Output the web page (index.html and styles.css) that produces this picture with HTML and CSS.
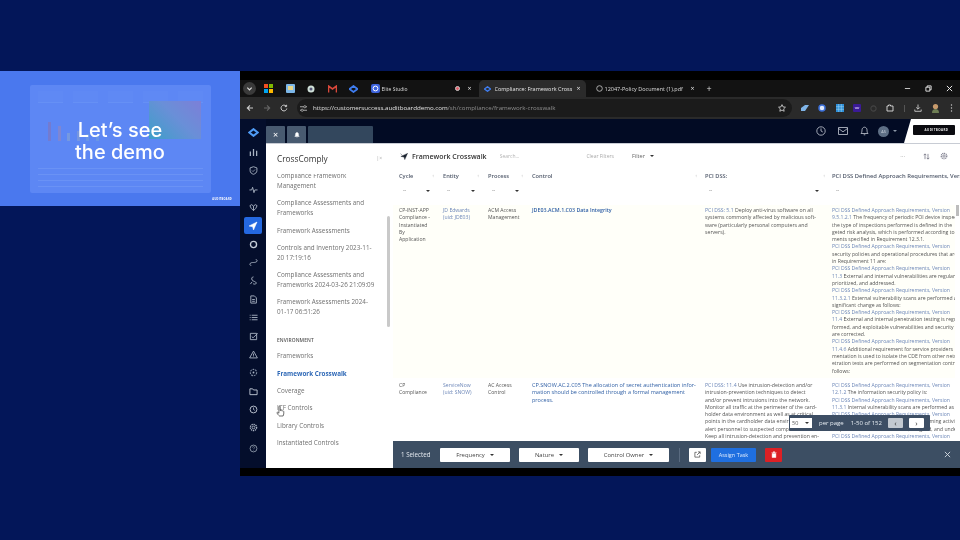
FILE: index.html
```html
<!DOCTYPE html>
<html lang="en">
<head>
<meta charset="utf-8">
<title>Let's see the demo</title>
<link rel="stylesheet" href="styles.css">
</head>
<body>
<div class="stage">

  <section class="slide">
    <div class="slide-card">
      <div class="sc-kpis"><i></i><i></i><i></i><i></i><i></i></div>
      <div class="sc-mid">
        <div class="sc-bars"><b class="b1"></b><b class="b2"></b><b class="b3"></b><b class="b4"></b><b class="b5"></b><b class="b6"></b></div>
        <div class="sc-heat"></div>
      </div>
      <div class="sc-rows"><i></i><i></i><i></i><i></i></div>
    </div>
    <h1 class="slide-title">Let’s see<br>the demo</h1>
    <div class="slide-logo">AUDITBOARD</div>
  </section>

  <section class="browser">
    <div class="tabstrip">
      <span class="tab-menu"><svg width="7" height="7" viewBox="0 0 8 8"><path d="M1.500 3l2.500 2.500L6.500 3" fill="none" stroke="#ddd" stroke-width="1.400"/></svg></span>
      <div class="pins">
        <svg width="9" height="9" viewBox="0 0 9 9"><rect width="4" height="4" fill="#f25022"/><rect x="5" width="4" height="4" fill="#7fba00"/><rect y="5" width="4" height="4" fill="#00a4ef"/><rect x="5" y="5" width="4" height="4" fill="#ffb900"/></svg>
        <svg width="9" height="9" viewBox="0 0 9 9"><rect width="9" height="9" rx="1" fill="#7db7e8"/><rect x="2" y="2" width="5" height="4" fill="#e8d68a"/></svg>
        <svg width="8" height="8" viewBox="0 0 8 8"><circle cx="4" cy="4" r="3.500" fill="#cfe0d8"/><circle cx="4" cy="4" r="1.500" fill="#557"/></svg>
        <svg width="9" height="8" viewBox="0 0 9 8"><path d="M.5 7.500V1l4 3 4-3v6.500" fill="none" stroke="#d9483b" stroke-width="1.600"/></svg>
        <svg width="9" height="8" viewBox="0 0 18 16"><path d="M1 8l8-6 8 6-8 6z" fill="none" stroke="#3f7df0" stroke-width="3.500"/></svg>
        <svg width="9" height="9" viewBox="0 0 9 9"><rect width="9" height="9" rx="2" fill="#3d63dd"/><circle cx="4.500" cy="4.500" r="2.400" fill="none" stroke="#fff"/></svg>
      </div>
      <div class="tab tab-elite"><span class="tab-name">Elite Studio</span><span class="rec"></span><span class="tab-x">×</span></div>
      <div class="tab tab-active">
        <svg width="7" height="6" viewBox="0 0 18 16"><path d="M1 8l8-6 8 6-8 6z" fill="none" stroke="#3f7df0" stroke-width="3.500"/></svg>
        <span class="tab-name">Compliance: Framework Cross</span><span class="tab-x">×</span>
      </div>
      <div class="tab tab-pdf">
        <svg width="7" height="7" viewBox="0 0 8 8"><circle cx="4" cy="4" r="3.200" fill="none" stroke="#bbb"/></svg>
        <span class="tab-name">12047-Policy Document (1).pdf</span><span class="tab-x">×</span>
      </div>
      <span class="tab-new">+</span>
      <div class="win-ctrls">
        <svg width="7" height="7" viewBox="0 0 8 8"><path d="M1 4h6" stroke="#ddd"/></svg>
        <svg width="7" height="7" viewBox="0 0 8 8"><path d="M1 2.500h4.500V7H1zM2.500 2.500V1H7v4.500H5.500" fill="none" stroke="#eee"/></svg>
        <svg width="7" height="7" viewBox="0 0 8 8"><path d="M1 1l6 6M7 1L1 7" stroke="#eee" stroke-width="1.100"/></svg>
      </div>
    </div>

    <div class="toolbar">
      <svg class="nav" width="8" height="8" viewBox="0 0 8 8"><path d="M7 4H1.500M4 1.300L1.300 4 4 6.700" fill="none" stroke="#ccc" stroke-width="1.100"/></svg>
      <svg class="nav" width="8" height="8" viewBox="0 0 8 8"><path d="M1 4h5.500M4 1.300L6.700 4 4 6.700" fill="none" stroke="#666" stroke-width="1.100"/></svg>
      <svg class="nav" width="8" height="8" viewBox="0 0 8 8"><path d="M6.800 4.500A2.900 2.900 0 1 1 6 2M6.600.8v1.800H4.800" fill="none" stroke="#ccc" stroke-width="1"/></svg>
      <div class="omnibox">
        <svg width="7" height="7" viewBox="0 0 8 8"><path d="M0 2h8M0 6h8" stroke="#bbb"/><circle cx="5.500" cy="2" r="1.300" fill="#222" stroke="#bbb" stroke-width=".8"/><circle cx="2.500" cy="6" r="1.300" fill="#222" stroke="#bbb" stroke-width=".8"/></svg>
        <span class="url"><span class="url-host">https://customersuccess.auditboarddemo.com</span>/sh/compliance/framework-crosswalk</span>
        <svg class="star" width="8" height="8" viewBox="0 0 10 10"><path d="M5 .8l1.300 2.800 3 .4-2.200 2.100.6 3L5 7.600 2.300 9.100l.6-3L.7 4l3-.4z" fill="none" stroke="#ddd" stroke-width="1"/></svg>
      </div>
      <div class="exts">
        <svg width="8" height="6" viewBox="0 0 8 6"><path d="M0 3l4-3h4L4 6H0z" fill="#7fb4e8"/></svg>
        <svg width="8" height="8" viewBox="0 0 8 8"><circle cx="4" cy="4" r="3" fill="#dfe8fa" stroke="#3b6fd8" stroke-width="1.500"/></svg>
        <svg width="8" height="8" viewBox="0 0 8 8"><rect width="8" height="8" fill="#2f8fd8"/><path d="M2.700 0v8M5.300 0v8M0 2.700h8M0 5.300h8" stroke="#a8dcf5" stroke-width=".5"/></svg>
        <svg width="8" height="8" viewBox="0 0 8 8"><rect width="8" height="8" rx="1" fill="#3a1a96"/><path d="M2 3l1 2 1-2 1 2 1-2" fill="none" stroke="#e6d9ff" stroke-width=".6"/></svg>
        <svg width="7" height="7" viewBox="0 0 8 8"><circle cx="4" cy="4" r="3" fill="none" stroke="#444" stroke-width="1.200"/></svg>
        <svg width="8" height="8" viewBox="0 0 8 8"><path d="M1 2h1.500V1h2v1H7v5H1z" fill="none" stroke="#ddd" stroke-width=".9"/></svg>
        <span class="ext-sep"></span>
        <svg width="8" height="8" viewBox="0 0 8 8"><path d="M4 .5v4.500M2.200 3.400L4 5.200l1.800-1.800M.8 5.500v1.800h6.400V5.500" fill="none" stroke="#ccc" stroke-width=".9"/></svg>
        <svg width="9" height="10" viewBox="0 0 9 10"><circle cx="4.500" cy="3.500" r="2.600" fill="#c79a6c"/><path d="M1 10c0-3 1.500-4 3.500-4S8 7 8 10z" fill="#6f7f55"/></svg>
        <svg width="3" height="8" viewBox="0 0 3 8"><circle cx="1.500" cy="1" r=".7" fill="#ccc"/><circle cx="1.500" cy="4" r=".7" fill="#ccc"/><circle cx="1.500" cy="7" r=".7" fill="#ccc"/></svg>
      </div>
    </div>

    <div class="app">
      <nav class="rail">
        <svg class="rail-logo" width="11" height="9" viewBox="0 0 18 16"><path d="M1.500 8l7.500-6 7.500 6-7.500 6z" fill="none" stroke="#4f9bf5" stroke-width="3.600"/></svg>
        <svg class="ri ri-first" viewBox="0 0 10 10"><path d="M1.500 9V4M5 9V1M8.500 9V3" fill="none" stroke="#aab4c4" stroke-width="1.400"/></svg>
        <svg class="ri" viewBox="0 0 10 10"><path d="M5 .8l3.800 1.300V5c0 2.300-1.700 3.600-3.800 4.200C2.900 8.600 1.200 7.300 1.200 5V2.100z" fill="none" stroke="#aab4c4"/><path d="M3.300 5l1.200 1.200 2.200-2.300" fill="none" stroke="#aab4c4" stroke-width=".8"/></svg>
        <svg class="ri" viewBox="0 0 10 10"><path d="M.5 5.500h2.500l1-3 1.500 6 1-3h3" fill="none" stroke="#aab4c4"/></svg>
        <svg class="ri" viewBox="0 0 10 10"><path d="M1 3l2-1.200L5 3.500l2-1.700L9 3 7.500 6 5 8.500 2.500 6zM5 3.500v5" fill="none" stroke="#aab4c4"/></svg>
        <span class="ri-active"><svg width="10" height="10" viewBox="0 0 10 10"><path d="M9 1L5.500 9 4.700 5.800 1 5z M4.700 5.800L9 1" fill="#fff" stroke="#fff" stroke-width=".5"/></svg></span>
        <svg class="ri" viewBox="0 0 10 10"><circle cx="5" cy="5" r="3.400" fill="none" stroke="#c4ccd8" stroke-width="1.500"/></svg>
        <svg class="ri" viewBox="0 0 10 10"><path d="M1 7c0-2 3-2 4-2s4-.2 4-2M2.500 8.300C1.400 8.300 1 7.600 1 7M7.500 1.700C8.600 1.700 9 2.400 9 3" fill="none" stroke="#aab4c4"/></svg>
        <svg class="ri" viewBox="0 0 10 10"><path d="M5 1C3 1 2.500 3 3.500 4.500S7.500 6 8 7.500 6 9.500 4.500 8.500M3.500 6.500L1.500 9" fill="none" stroke="#aab4c4"/></svg>
        <svg class="ri" viewBox="0 0 10 10"><path d="M2 1h4l2.200 2.200V9H2zM3.500 5h3M3.500 7h3" fill="none" stroke="#aab4c4"/></svg>
        <svg class="ri" viewBox="0 0 10 10"><path d="M3 2.500h6.500M3 5h6.500M3 7.500h6.500M.8 2.500h1M.8 5h1M.8 7.500h1" stroke="#aab4c4"/></svg>
        <svg class="ri" viewBox="0 0 10 10"><path d="M1.500 1.500h7v7h-7zM3 5l1.500 1.500L9.500 1.500" fill="none" stroke="#aab4c4"/></svg>
        <svg class="ri" viewBox="0 0 10 10"><path d="M5 1.200L9.300 8.800H.7zM5 4v2.400M5 7.200v.5" fill="none" stroke="#aab4c4"/></svg>
        <svg class="ri" viewBox="0 0 10 10"><circle cx="5" cy="5" r="3.500" fill="none" stroke="#7f8ba0" stroke-dasharray="2 1" stroke-width="1.200"/><circle cx="5" cy="5" r="1" fill="#aab4c4"/></svg>
        <svg class="ri" viewBox="0 0 10 10"><path d="M1 2h3l1 1.300h4V8.500H1z" fill="none" stroke="#c4ccd8"/></svg>
        <svg class="ri" viewBox="0 0 10 10"><circle cx="5" cy="5" r="3.800" fill="none" stroke="#c4ccd8"/><path d="M5 2.800V5l1.500 1" fill="none" stroke="#c4ccd8" stroke-width=".8"/></svg>
        <svg class="ri" viewBox="0 0 10 10"><circle cx="5" cy="5" r="1.500" fill="none" stroke="#aab4c4"/><circle cx="5" cy="5" r="3.500" fill="none" stroke="#aab4c4" stroke-width="1.400" stroke-dasharray="1.500 .8"/></svg>
        <svg class="ri ri-help" viewBox="0 0 10 10"><circle cx="5" cy="5" r="3.800" fill="none" stroke="#8c97a8"/><path d="M3.800 4c0-1.500 2.400-1.500 2.400 0 0 .9-1.200.9-1.200 1.800M5 6.800v.5" fill="none" stroke="#8c97a8" stroke-width=".7"/></svg>
      </nav>

      <div class="main">
        <header class="apphead">
          <div class="apptabs">
            <span class="apptab apptab-s">×</span>
            <span class="apptab apptab-s"><svg width="6" height="6" viewBox="0 0 8 8"><path d="M1 6c1-1 .8-2 1-3.500C2.200 1.300 3 .8 4 .8s1.800.5 2 1.700C6.200 4 6 5 7 6zM3.200 7h1.600" fill="#fff" stroke="#fff" stroke-width=".5"/></svg></span>
            <span class="apptab apptab-w"></span>
          </div>
          <div class="headicons">
            <svg width="10" height="10" viewBox="0 0 10 10"><circle cx="5" cy="5" r="4.200" fill="none" stroke="#c6ccd6" stroke-width=".8"/><path d="M5 2.400V5l1.800 1" fill="none" stroke="#c6ccd6" stroke-width=".8"/></svg>
            <svg width="10" height="8" viewBox="0 0 10 8"><path d="M.5.500h9v7h-9zM.5 1.500L5 4.800l4.500-3.300" fill="none" stroke="#c6ccd6" stroke-width=".8"/></svg>
            <svg width="9" height="10" viewBox="0 0 9 10"><path d="M1 7.500c1-1 .9-2 1-3.700C2.100 2.300 3.200 1.200 4.500 1.200s2.400 1.100 2.500 2.600c.1 1.700 0 2.700 1 3.700zM3.700 8.800h1.600" fill="none" stroke="#c6ccd6" stroke-width=".8"/></svg>
            <span class="avatar">AS</span>
            <span class="caret caret-lt"></span>
          </div>
          <div class="brandbox"><span class="brand">AUDITBOARD</span></div>
        </header>

        <div class="workspace">
          <aside class="panel">
            <div class="panel-title"><span>CrossComply</span><span class="collapse">|×</span></div>
            <div class="panel-scroll">
              <div class="panel-list">
                <a class="pl">Compliance Framework<br>Management</a>
                <a class="pl">Compliance Assessments and<br>Frameworks</a>
                <a class="pl">Framework Assessments</a>
                <a class="pl">Controls and Inventory 2023-11-<br>20 17:19:16</a>
                <a class="pl">Compliance Assessments and<br>Frameworks 2024-03-26 21:09:09</a>
                <a class="pl">Framework Assessments 2024-<br>01-17 06:51:26</a>
                <div class="pl-head">ENVIRONMENT</div>
                <a class="pl">Frameworks</a>
                <a class="pl pl-on">Framework Crosswalk</a>
                <a class="pl">Coverage</a>
                <a class="pl">ICF Controls</a>
                <a class="pl">Library Controls</a>
                <a class="pl">Instantiated Controls</a>
              </div>
              <span class="panel-bar"></span>
            </div>
          </aside>

          <div class="content">
            <div class="toprow">
              <svg width="8" height="7" viewBox="0 0 10 9"><path d="M9.500.5L6 8.500 5 5.200 1 4.400zM.5.800L3 3.200M5 5.200L9.500.5" fill="#1c2430" stroke="#1c2430" stroke-width=".5"/></svg>
              <span class="page-title">Framework Crosswalk</span>
              <span class="search">Search...</span>
              <span class="clear">Clear Filters</span>
              <span class="filter">Filter</span><span class="caret"></span>
              <span class="more">···</span>
              <svg class="sorticon" width="7" height="7" viewBox="0 0 8 8"><path d="M2.300 7V1M.8 2.500l1.500-1.500 1.500 1.500M5.700 1v6M4.200 5.500l1.500 1.500 1.500-1.500" fill="none" stroke="#667" stroke-width=".8"/></svg>
              <svg class="gear" width="8" height="8" viewBox="0 0 10 10"><circle cx="5" cy="5" r="1.500" fill="none" stroke="#778"/><circle cx="5" cy="5" r="3.500" fill="none" stroke="#778" stroke-width="1.400" stroke-dasharray="1.500 .8"/></svg>
            </div>

            <div class="grid headrow">
              <div class="th">Cycle<i>↕</i></div>
              <div class="th">Entity<i>↕</i></div>
              <div class="th">Process<i>↕</i></div>
              <div class="th th-ctl">Control<i>↕</i></div>
              <div class="th th-pci">PCI DSS:<i>↕</i></div>
              <div class="th th-last">PCI DSS Defined Approach Requirements, Version</div>
            </div>
            <div class="grid filterrow">
              <div class="fc">--<span class="caret"></span></div>
              <div class="fc">--<span class="caret"></span></div>
              <div class="fc">--<span class="caret"></span></div>
              <div class="fc fc-none"></div>
              <div class="fc">--<span class="caret"></span></div>
              <div class="fc fc-last">--</div>
            </div>

            <div class="tablebody">
              <div class="grid row row-sel">
                <div class="td">CP-INST-APP<br>Compliance -<br>Instantiated<br>By<br>Application</div>
                <div class="td link">JD Edwards<br>(uid: JDE03)</div>
                <div class="td">ACM Access<br>Management</div>
                <div class="td ctl">JDE03.ACM.1.C03 Data Integrity</div>
                <div class="td td-pci"><span class="link">PCI DSS: 5.1</span> Deploy anti-virus software on all<br>systems commonly affected by malicious soft-<br>ware (particularly personal computers and<br>servers).</div>
                <div class="td td-last">
                  <div class="link">PCI DSS Defined Approach Requirements, Version</div>
                  <div><span class="link">9.5.1.2.1</span> The frequency of periodic POI device inspections and</div>
                  <div>the type of inspections performed is defined in the</div>
                  <div>geted risk analysis, which is performed according to</div>
                  <div>ments specified in Requirement 12.3.1.</div>
                  <div class="link">PCI DSS Defined Approach Requirements, Version</div>
                  <div>security policies and operational procedures that are</div>
                  <div>in Requirement 11 are:</div>
                  <div class="link">PCI DSS Defined Approach Requirements, Version</div>
                  <div><span class="link">11.3</span> External and internal vulnerabilities are regularly</div>
                  <div>prioritized, and addressed.</div>
                  <div class="link">PCI DSS Defined Approach Requirements, Version</div>
                  <div><span class="link">11.3.2.1</span> External vulnerability scans are performed after</div>
                  <div>significant change as follows:</div>
                  <div class="link">PCI DSS Defined Approach Requirements, Version</div>
                  <div><span class="link">11.4</span> External and internal penetration testing is regularly</div>
                  <div>formed, and exploitable vulnerabilities and security</div>
                  <div>are corrected.</div>
                  <div class="link">PCI DSS Defined Approach Requirements, Version</div>
                  <div><span class="link">11.4.6</span> Additional requirement for service providers</div>
                  <div>mentation is used to isolate the CDE from other networks</div>
                  <div>etration tests are performed on segmentation controls</div>
                  <div>follows:</div>
                </div>
              </div>
              <div class="grid row row-two">
                <div class="td">CP<br>Compliance</div>
                <div class="td link">ServiceNow<br>(uid: SNOW)</div>
                <div class="td">AC Access<br>Control</div>
                <div class="td ctl">CP.SNOW.AC.2.C05 The allocation of secret authentication infor-<br>mation should be controlled through a formal management<br>process.</div>
                <div class="td td-pci"><span class="link">PCI DSS: 11.4</span> Use intrusion-detection and/or<br>intrusion-prevention techniques to detect<br>and/or prevent intrusions into the network.<br>Monitor all traffic at the perimeter of the card-<br>holder data environment as well as at critical<br>points in the cardholder data environment, and<br>alert personnel to suspected compromises.<br>Keep all intrusion-detection and prevention en-</div>
                <div class="td td-last">
                  <div class="link">PCI DSS Defined Approach Requirements, Version</div>
                  <div><span class="link">12.1.2</span> The information security policy is:</div>
                  <div class="link">PCI DSS Defined Approach Requirements, Version</div>
                  <div><span class="link">11.3.1</span> Internal vulnerability scans are performed as</div>
                  <div class="link">PCI DSS Defined Approach Requirements, Version</div>
                  <div><span class="link">1.1.2</span> Roles and responsibilities for performing activities in</div>
                  <div>Requirement 1 are documented, assigned, and understood</div>
                  <div class="link">PCI DSS Defined Approach Requirements, Version</div>
                </div>
              </div>
              <span class="tb-scroll"></span>
            </div>

            <div class="pager">
              <span class="pg-select">50<span class="caret"></span></span>
              <span class="pg-text">per page</span>
              <span class="pg-text pg-range">1-50 of 152</span>
              <span class="pg-btn pg-prev">‹</span>
              <span class="pg-btn">›</span>
            </div>

            <div class="actionbar">
              <span class="sel-count">1 Selected</span>
              <span class="ab-btn ab-freq">Frequency<span class="caret"></span></span>
              <span class="ab-btn ab-nature">Nature<span class="caret"></span></span>
              <span class="ab-btn ab-owner">Control Owner<span class="caret"></span></span>
              <span class="ab-sep"></span>
              <span class="ab-icon"><svg width="7" height="7" viewBox="0 0 8 8"><path d="M6.500 4.800V7H1V1.500h2.200M4.500 1H7v2.500M7 1L3.500 4.500" fill="none" stroke="#444" stroke-width=".8"/></svg></span>
              <span class="ab-assign">Assign Task</span>
              <span class="ab-del"><svg width="6" height="7" viewBox="0 0 8 9"><path d="M.5 2h7M3 2V.8h2V2M1.500 3h5v5.500h-5z" fill="#fff" stroke="#fff" stroke-width=".6"/></svg></span>
              <span class="ab-close"><svg width="7" height="7" viewBox="0 0 8 8"><path d="M1 1l6 6M7 1L1 7" stroke="#d8dee6" stroke-width="1"/></svg></span>
            </div>
          </div>
        </div>
      </div>
    </div>
    <svg class="cursor" width="10" height="13" viewBox="0 0 10 13"><path d="M3 1.200c.6-.6 1.200 0 1.200.5v4l.6-.3c.5-.1.700.1.900.4.500-.3.900-.1 1.100.3.500-.2.900.1 1 .5.100 1.700 0 3.200-.7 4.400H3.500C2.800 10.500 1.700 9.400 1 8c-.2-.5.300-1 .9-.6l1 .8V1.700z" fill="#fff" stroke="#333" stroke-width=".7"/></svg>
  </section>
</div>
</body>
</html>
```

FILE: styles.css
```css
* { box-sizing: border-box; }
html, body { margin: 0; padding: 0; width: 960px; height: 540px; overflow: hidden; background: #031659; }
body { font-family: "Open Sans", "Liberation Sans", sans-serif; color: #444; }
.stage { position: relative; width: 960px; height: 540px; filter: blur(.35px); }
a { color: inherit; text-decoration: none; }

/* Slide */
.slide { position: absolute; left: 0; top: 71px; width: 240px; height: 135px; background: #4a78ee; padding: 14px 29px 0 30px; }
.slide-card { width: 181px; height: 108px; background: #5d87f4; border-radius: 2px; padding: 6px 8px; display: flex; flex-direction: column; gap: 6px; }
.sc-kpis { display: flex; gap: 10px; height: 13px; }
.sc-kpis i { flex: 1; background: #5f89f4; border-bottom: 1px solid #6690f5; }
.sc-mid { display: flex; justify-content: space-between; height: 44px; margin-right: 2px; }
.sc-bars { display: flex; align-items: flex-end; gap: 6.500px; margin: 8px 0 0 10px; height: 24px; opacity: .75; }
.sc-bars b { width: 3px; background: #7f88d8; display: block; }
.sc-bars .b1 { height: 19px; background: #7b77c4; }
.sc-bars .b2 { height: 15px; background: #8a86c8; }
.sc-bars .b3 { height: 8px; background: #7fa0d8; }
.sc-bars .b4 { height: 10px; background: #7f9cd8; }
.sc-bars .b5 { height: 7px; background: #6f9ae0; }
.sc-bars .b6 { height: 5px; background: #6f9ae0; }
.sc-heat { width: 52px; height: 38px; margin-top: -8px; background: linear-gradient(45deg, #3d9fc8, #6a8fd8 55%, #7c7fd8); }
.sc-rows { display: flex; flex-direction: column; gap: 5px; margin-top: 14px; }
.sc-rows i { height: 1px; background: #6a92f5; }
.slide-title { position: absolute; left: 0; right: 0; top: 48px; margin: 0; text-align: center; color: #fff; font: 500 20px/22px "Inter", "Open Sans", sans-serif; }
.slide-logo { position: absolute; right: 8px; bottom: 5px; font: 700 2.500px/4px "Open Sans", sans-serif; color: #fff; letter-spacing: .3px; }

/* Browser */
.browser { position: absolute; left: 240px; top: 71px; width: 720px; height: 405px; padding-top: 9px; background: #000; display: flex; flex-direction: column; }
.tabstrip { height: 17px; flex: none; background: #121212; display: flex; align-items: center; color: #ddd; font-size: 5.500px; position: relative; }
.tab-menu { width: 13px; height: 13px; margin-left: 3px; border-radius: 50%; background: #3a3a3a; display: flex; align-items: center; justify-content: center; }
.pins { display: flex; align-items: center; gap: 12.500px; margin-left: 8px; }
.tab { display: flex; align-items: center; height: 17px; }
.tab-elite { width: 96px; padding: 0 4px 0 2px; font-size: 5px; }
.tab-elite .tab-name { flex: 1; }
.rec { width: 5px; height: 5px; border-radius: 50%; background: #e0606a; border: 1px solid #ccc; margin-right: 7px; }
.tab-x { font-size: 7px; line-height: 7px; color: #ddd; }
.tab-active { width: 107px; margin-left: 3px; background: #2b2b2b; border-radius: 5px 5px 0 0; padding: 0 5px 0 5px; gap: 4px; color: #e6e6e6; }
.tab-active .tab-name { flex: 1; white-space: nowrap; overflow: hidden; }
.tab-pdf { margin-left: 10px; gap: 2px; width: 99px; }
.tab-pdf .tab-name { flex: 1; white-space: nowrap; }
.tab-new { font-size: 9px; margin-left: 12px; color: #ddd; }
.win-ctrls { margin-left: auto; display: flex; gap: 14px; margin-right: 7px; }
.toolbar { height: 22px; flex: none; background: #2a2a2a; display: flex; align-items: center; padding-left: 6px; }
.nav { margin-right: 9px; }
.omnibox { width: 495px; height: 18px; margin-left: 0; border-radius: 9px; background: #1b1b1b; display: flex; align-items: center; padding: 0 6px 0 3px; }
.url { margin-left: 6px; font: 6.180px/8px "Open Sans", sans-serif; color: #8f8f8f; white-space: nowrap; }
.url-host { color: #e2e2e2; }
.star { margin-left: auto; }
.exts { flex: 1; display: flex; align-items: center; gap: 9.300px; padding-left: 9px; }
.ext-sep { width: 1px; height: 7px; background: #555; }

.app { height: 349px; flex: none; display: flex; background: #020b24; }
.rail { width: 26px; flex: none; background: #040e2c; display: flex; flex-direction: column; align-items: center; padding-top: 9px; }
.rail-logo { flex: none; }
.ri { width: 9px; height: 9px; flex: none; margin-top: 9.400px; }
.ri-first { margin-top: 11px; }
.ri-active { width: 18px; height: 17px; margin-top: 5px; margin-bottom: -4px; background: #2468e0; border-radius: 2px; display: flex; align-items: center; justify-content: center; flex: none; }
.ri-help { margin-top: 12px; }
.main { flex: 1; min-width: 0; display: flex; flex-direction: column; }
.apphead { height: 24px; flex: none; background: #020b24; display: flex; align-items: flex-end; }
.apptabs { display: flex; gap: 2px; }
.apptab { height: 17px; background: #485a70; display: flex; align-items: center; justify-content: center; color: #fff; font-size: 9px; border-radius: 1px 1px 0 0; }
.apptab-s { width: 19px; }
.apptab-w { width: 65px; background: #33475d; }
.headicons { margin-left: auto; align-self: center; display: flex; align-items: center; gap: 12px; padding-right: 7px; }
.avatar { width: 11px; height: 11px; margin-left: -3px; border-radius: 50%; background: #5e6f85; color: #ccd4de; font-size: 3.800px; display: flex; align-items: center; justify-content: center; }
.headicons .caret { margin: 0 0 0 -8px; border-top-color: #8a96a6; }
.brandbox { width: 56px; height: 24px; background: #fff; clip-path: polygon(7px 0, 100% 0, 100% 100%, 0 100%); display: flex; align-items: center; justify-content: flex-start; padding: 0 0 2px 9px; }
.brand { width: 42px; height: 10px; background: #0a0a0f; color: #e8e8e8; font: 700 3px/10px "Open Sans", sans-serif; text-align: center; letter-spacing: .4px; padding-left: 5px; border-radius: 1px; white-space: nowrap; }

.workspace { flex: 1; display: flex; min-height: 0; background: #fff; border-top: 1px solid #c8ccd4; }
.panel { width: 127px; flex: none; background: #fff; display: flex; flex-direction: column; }
.panel-title { height: 30px; flex: none; display: flex; align-items: center; justify-content: space-between; padding: 0 11px 2px; font-size: 8.300px; color: #333; }
.collapse { color: #aaa; font-size: 5px; }
.panel-scroll { flex: 1; overflow: hidden; position: relative; }
.panel-list { margin-top: -3px; padding: 0 0 0 11px; font-size: 6.300px; line-height: 10px; color: #707070; }
.pl { display: block; margin-bottom: 7.300px; white-space: nowrap; }
.pl-head { font-size: 4.900px; font-weight: 600; color: #555; margin: 18px 0 6px; letter-spacing: .1px; }
.pl-on { color: #2f69b7; font-weight: 700; }
.panel-bar { position: absolute; left: 121px; top: 42px; width: 3px; height: 111px; background: #c9c9c9; border-radius: 2px; }

.content { flex: 1; min-width: 0; display: flex; flex-direction: column; position: relative; background: #fff; }
.toprow { height: 24px; flex: none; display: flex; align-items: center; padding: 0 12px 0 7px; }
.page-title { font-size: 7px; font-weight: 600; color: #333; margin-left: 4px; }
.search { font-size: 5px; color: #b4b4b4; margin-left: 13px; }
.clear { font-size: 5px; color: #aaa; margin-left: 67px; }
.filter { font-size: 5.600px; color: #666; margin-left: 18px; }
.more { margin-left: auto; font-size: 6px; color: #888; }
.sorticon { margin-left: 18px; }
.gear { margin-left: 10px; }
.caret { display: inline-block; width: 0; height: 0; border: 2px solid transparent; border-top: 2.500px solid #333; border-bottom: 0; margin-left: 5px; vertical-align: middle; }
.toprow .caret { margin-left: 5px; }

.grid { display: grid; grid-template-columns: 44px 45px 44px 173px 127px 1fr; padding-left: 6px; }
.headrow { height: 16px; flex: none; font-size: 5.700px; font-weight: 600; color: #50596a; align-items: center; }
.th { position: relative; white-space: nowrap; overflow: hidden; }
.th-last { font-size: 5.850px; }
.th i { position: absolute; right: 9px; top: 1px; font-style: normal; font-size: 4px; color: #aaa; }
.th-ctl i { right: 8px; }
.th-pci i { right: 7px; }
.filterrow { height: 12px; flex: none; font-size: 5px; color: #888; align-items: center; }
.fc { position: relative; padding-left: 4px; }
.fc .caret { position: absolute; right: 13px; top: 3px; }
.fc-last { padding-left: 4px; }
.tablebody { flex: 1; min-height: 0; overflow: hidden; position: relative; padding-right: 5px; margin-top: 9px; }
.row { align-items: start; font-size: 5.100px; line-height: 7.300px; color: #555; height: 173px; padding-top: 2px; }
.row-two { height: 70px; padding-top: 4px; }
.row-sel { background: #fffff9; }
.td { padding-right: 4px; white-space: nowrap; }
.td-pci { font-size: 5.200px; }
.td-last { padding-right: 0; overflow: hidden; }
.link { color: #6d87b8; }
.ctl { color: #2f5fa5; font-weight: 600; font-size: 5.300px; }
.row-two .ctl { font-size: 5.500px; font-weight: 500; }
.tb-scroll { position: absolute; right: 1px; top: 0; width: 3px; height: 11px; background: #bdbdbd; }

.pager { position: absolute; left: 396px; top: 271px; width: 141px; height: 16px; background: #3d4e64; display: flex; align-items: center; padding: 0 3px 0 1px; color: #e6ecf2; font-size: 6px; border-radius: 1px; }
.pg-select { width: 22px; height: 10px; background: #fff; color: #555; display: flex; align-items: center; justify-content: space-between; padding: 0 3px 0 2px; font-size: 5.500px; }
.pg-select .caret { margin-left: 0; }
.pg-text { margin-left: 7px; white-space: nowrap; }
.pg-range { margin-left: 7px; }
.pg-btn { width: 15px; height: 10px; margin-left: 6px; background: #fff; color: #333; display: flex; align-items: center; justify-content: center; font-size: 8px; line-height: 8px; border-radius: 1px; }
.pg-prev { background: #c3c9d0; }

.actionbar { height: 27px; flex: none; background: #3c4e63; display: flex; align-items: center; padding: 0 9px 0 8px; color: #e5eaf0; font-size: 6.200px; }
.sel-count { width: 39px; flex: none; white-space: nowrap; }
.ab-btn { height: 14px; background: #fff; color: #444; display: flex; align-items: center; justify-content: center; border-radius: 1px; font-size: 5.900px; flex: none; margin-right: 9px; }
.ab-freq { width: 70px; }
.ab-nature { width: 60px; }
.ab-owner { width: 81px; }
.ab-sep { width: 1px; height: 14px; background: #5a6b80; margin: 0 9px 0 1px; flex: none; }
.ab-icon { width: 17px; height: 14px; background: #fff; display: flex; align-items: center; justify-content: center; flex: none; margin-right: 5px; border-radius: 1px; }
.ab-assign { width: 45px; height: 14px; background: #1f6fe0; color: #dbe8fb; display: flex; align-items: center; justify-content: center; font-size: 5.500px; border-radius: 1px; flex: none; margin-right: 9px; }
.ab-del { width: 17px; height: 14px; background: #dd2025; display: flex; align-items: center; justify-content: center; flex: none; border-radius: 1px; }
.ab-close { margin-left: auto; display: flex; }

.cursor { position: absolute; left: 36px; top: 334px; }
```
